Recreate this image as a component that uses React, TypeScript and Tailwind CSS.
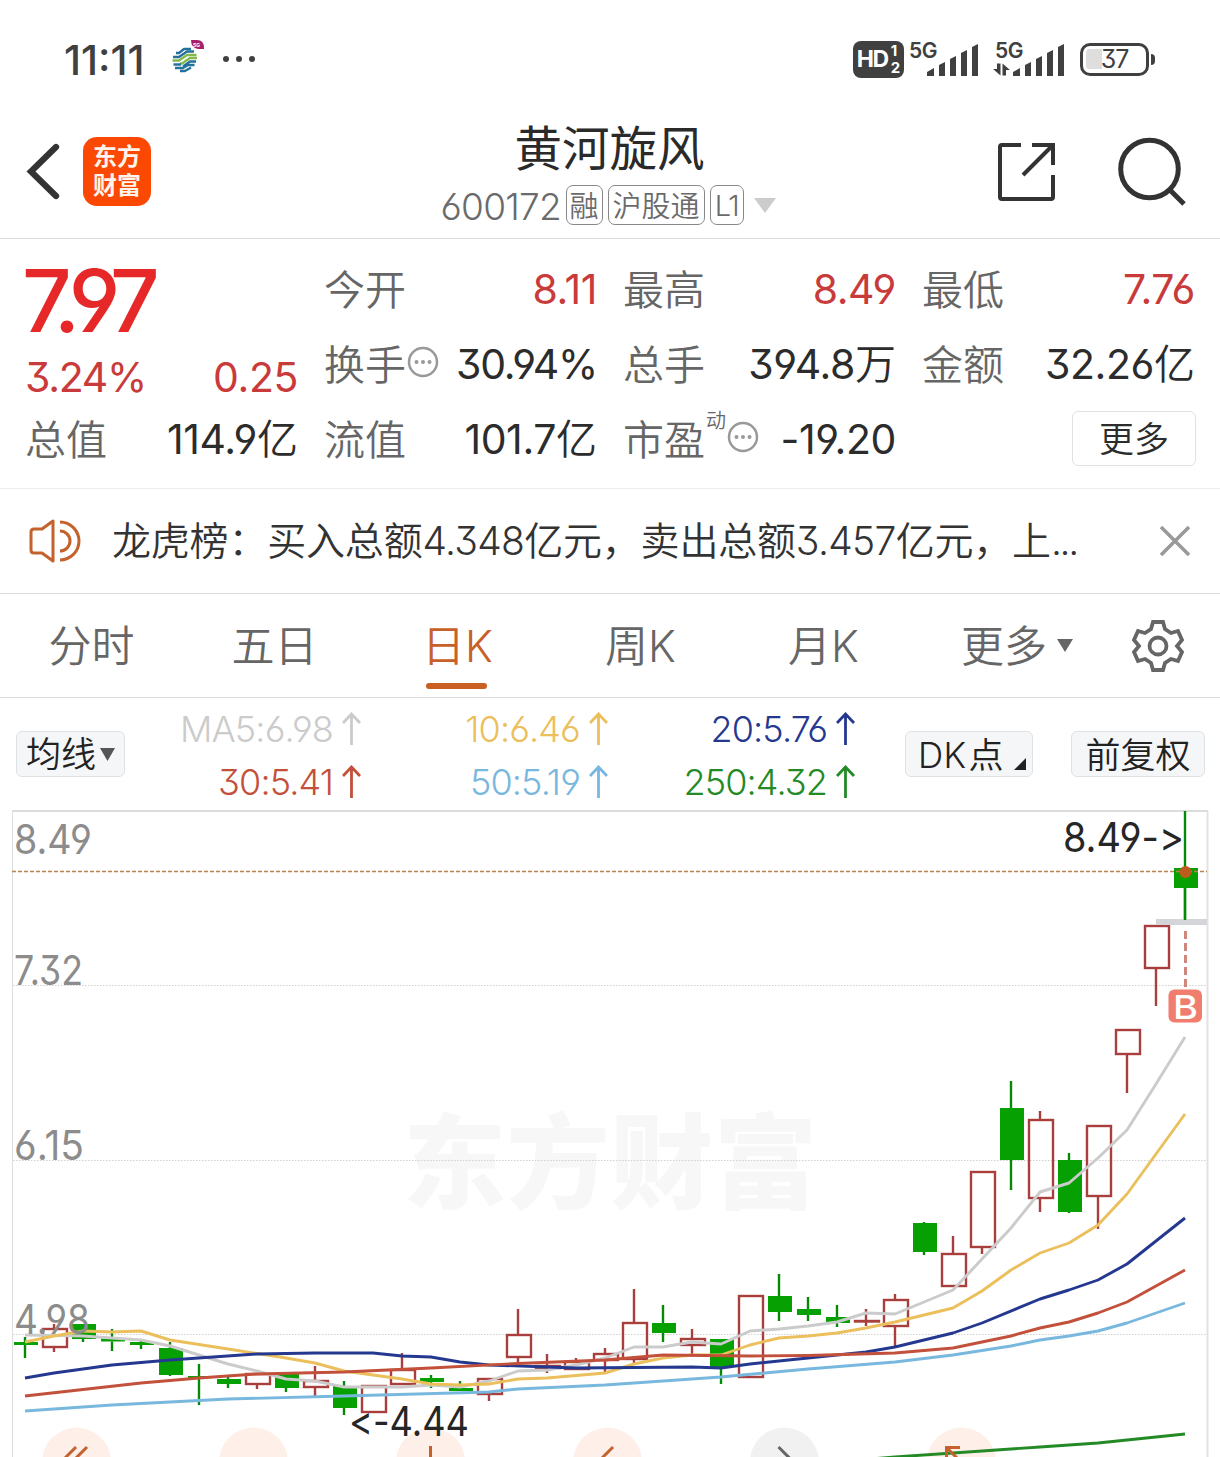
import type { ReactNode } from "react";

type Candle = {
  up: boolean;
  top: number;
  bottom: number;
  high: number;
  low: number;
};

const up = (top: number, bottom: number, high = top, low = bottom): Candle => ({ up: true, top, bottom, high, low });
const down = (top: number, bottom: number, high = top, low = bottom): Candle => ({ up: false, top, bottom, high, low });

const candles: Candle[] = [
  down(1342, 1345, 1337, 1358),
  up(1329, 1347, 1324, 1352),
  down(1324, 1339, 1324, 1342),
  down(1338.5, 1341.5, 1329, 1351),
  down(1342, 1345, 1340, 1349),
  down(1348, 1375, 1342, 1376),
  down(1376, 1378, 1364, 1405),
  down(1379, 1384, 1376, 1388),
  up(1374, 1384, 1373, 1389),
  down(1374, 1388, 1372, 1392),
  up(1381, 1387, 1366, 1398),
  down(1386, 1408, 1381, 1415),
  up(1386, 1412),
  up(1370, 1384, 1353, 1384),
  down(1378, 1382, 1375, 1388),
  down(1388, 1391, 1381, 1391),
  up(1379, 1394, 1379, 1401),
  up(1335, 1357, 1309, 1363),
  up(1366, 1368, 1354, 1373),
  up(1362, 1369, 1358, 1369),
  up(1354, 1360, 1348, 1374),
  up(1323, 1359, 1289, 1364),
  down(1323, 1333, 1305, 1342),
  up(1339, 1345, 1329, 1354),
  down(1339, 1367, 1339, 1384),
  up(1296, 1377),
  down(1296, 1312, 1274, 1321),
  down(1309, 1315, 1297, 1321),
  down(1317, 1323, 1305, 1327),
  up(1321, 1321.5, 1309, 1326),
  up(1300, 1326, 1294, 1346),
  down(1223, 1252, 1222, 1255),
  up(1254, 1286, 1236, 1286),
  up(1172, 1247, 1172, 1254),
  down(1108, 1160, 1081, 1190),
  up(1120, 1198, 1111, 1212),
  down(1160, 1212, 1153, 1213),
  up(1126, 1196, 1126, 1229),
  up(1030, 1054, 1030, 1093),
  up(926, 968, 926, 1006),
  down(868, 888, 811, 920),
];

const maLines = [
  {
    color: "#cbcbcb",
    points:
      "25,1335 83,1336 112,1338 141,1340 170,1346 199,1355 228,1364 257,1371 286,1379 315,1381 344,1387 373,1387 402,1387 431,1385 460,1387 489,1381 518,1371 547,1370 576,1365 605,1358 634,1347 663,1347 692,1342 721,1344 750,1331 779,1329 808,1326 837,1322 866,1313 895,1314 924,1302 953,1290 982,1259 1011,1228 1040,1192 1069,1183 1098,1158 1127,1130 1156,1084 1185,1037",
  },
  {
    color: "#ebc05c",
    points:
      "25,1342 54,1336 83,1331 112,1332 141,1331 170,1340 228,1349 286,1358 315,1363 344,1371 402,1379 431,1384 460,1385 489,1384 518,1379 547,1378 605,1373 634,1364 663,1358 692,1355 721,1355 750,1345 779,1338 808,1336 837,1333 866,1328 895,1322 953,1308 982,1291 1011,1270 1040,1253 1069,1243 1098,1225 1127,1194 1156,1154 1185,1114",
  },
  {
    color: "#25388f",
    points:
      "25,1378 54,1373 112,1365 170,1360 257,1354 315,1353 373,1353 402,1356 431,1357 460,1362 489,1365 547,1367 576,1368 692,1367 721,1368 750,1364 808,1358 866,1352 895,1347 924,1340 953,1333 982,1323 1040,1299 1069,1290 1098,1280 1127,1264 1185,1218",
  },
  {
    color: "#c2503a",
    points:
      "25,1396 141,1383 199,1378 257,1374 344,1372 431,1368 518,1363.5 605,1360 663,1355 750,1356 808,1355.5 895,1353 953,1348 1011,1336 1040,1328 1069,1322 1098,1313 1127,1302 1185,1270",
  },
  {
    color: "#79b8de",
    points:
      "25,1411 112,1405 228,1399 344,1396 489,1392 518,1389 605,1385 721,1377 808,1369 895,1362 953,1355 1011,1346 1040,1340 1069,1336 1098,1331 1127,1323 1185,1303",
  },
  { color: "#248a26", points: "870,1459 895,1457 953,1453 1011,1449 1040,1447 1098,1443 1127,1440 1185,1434" },
];

const axisLabels = [
  { text: "8.49", y: 854, width: 78 },
  { text: "7.32", y: 985, width: 69 },
  { text: "6.15", y: 1160, width: 70 },
  { text: "4.98", y: 1334, width: 76 },
];

const averages = [
  { text: "MA5:6.98", className: "text-[#cbcbcb]" },
  { text: "10:6.46", className: "text-[#ebc05c]" },
  { text: "20:5.76", className: "text-[#25388f]" },
  { text: "30:5.41", className: "text-[#c2503a]" },
  { text: "50:5.19", className: "text-[#79b8de]" },
  { text: "250:4.32", className: "text-[#248a26]" },
];

const tabs = ["分时", "五日", "日K", "周K", "月K"];

function Num({ children, tight }: { children: ReactNode; tight?: boolean }) {
  return <span className={tight ? "font-[380] tracking-[-0.032em]" : "font-[380] tracking-[-0.01em]"}>{children}</span>;
}

function MoreDots() {
  return (
    <svg className="-mt-2 ml-px" width="32" height="32" viewBox="0 0 32 32" fill="none" aria-hidden="true">
      <circle cx="16" cy="16" r="14" stroke="#999" strokeWidth="2.5" />
      <circle cx="9.5" cy="16" r="2" fill="#999" />
      <circle cx="16" cy="16" r="2" fill="#999" />
      <circle cx="22.5" cy="16" r="2" fill="#999" />
    </svg>
  );
}

function Stat({ label, children, red }: { label: ReactNode; children: ReactNode; red?: boolean }) {
  return (
    <div className="flex h-[75px] items-center justify-between">
      <span className="flex items-center pt-0.5 text-[#666]">{label}</span>
      <span className={red ? "text-[#c93a3a]" : "text-[#2c2c2c]"}>{children}</span>
    </div>
  );
}

function Signal({ data }: { data?: boolean }) {
  return (
    <div className="relative h-9 w-[70px]">
      <span className="absolute -top-px -left-px text-[21px] leading-none font-semibold tracking-[-0.02em]">5G</span>
      <svg className="absolute inset-0 overflow-visible" width="70" height="36" viewBox="0 0 70 36" fill="#404040" aria-hidden="true">
        <path d="M17 35V31L24 27V35Z" />
        <path d="M29 35V24L35 21V35Z" />
        <path d="M40 35V18L46 15V35Z" />
        <path d="M51 35V12L57 9V35Z" />
        <path d="M62 35V6L68 3V35Z" />
        {data && (
          <>
            <path d="M1 22.500H4.500V34.500L-3 28H1Z" />
            <path d="M6.500 34.500V22.500L14 29H10V34.500Z" />
          </>
        )}
      </svg>
    </div>
  );
}

function StatusBar() {
  return (
    <div className="flex h-[104px] items-start justify-between pt-[40px] pr-[65px] pl-[64px] text-[#404040]">
      <div className="flex h-[38px] items-center">
        <span className="w-[84px] pt-0.5 text-[41px] leading-none font-medium whitespace-nowrap">11:11</span>
        <svg className="ml-[22px]" width="38" height="38" viewBox="0 0 38 38" fill="none" aria-hidden="true">
          <g strokeLinejoin="round" strokeWidth="2.300">
            <path d="M6 13H9L14 9H21" stroke="#24719b" />
            <path d="M3 17H9L17 11.500H24" stroke="#24719b" />
            <path d="M2.500 20.500H9L17 15H26.500" stroke="#84b84c" />
            <path d="M10 23.500H12L20 18H27" stroke="#84b84c" />
            <path d="M3.500 24.500H11M13 26.500L20 21.500H26" stroke="#24719b" />
            <path d="M5 28H13L18 25H24.500M10 31H15L21 27.500" stroke="#24719b" />
          </g>
          <path d="M21 0H27Q34 0 34 8V9H28Q21 8 21 0Z" fill="#a8206c" />
          <text x="23" y="7" fill="#fff" fontSize="5" fontWeight="700">5G</text>
        </svg>
        <div className="ml-[15px] flex gap-[7px]">
          <i className="size-1.5 rounded-full bg-[#404040]" />
          <i className="size-1.5 rounded-full bg-[#404040]" />
          <i className="size-1.5 rounded-full bg-[#404040]" />
        </div>
      </div>
      <div className="flex h-[38px] items-center">
        <div className="flex h-[37px] w-[51px] items-center justify-center rounded-lg bg-[#404040] text-white">
          <span className="text-[23px] leading-none font-bold tracking-[-0.06em]">HD</span>
          <span className="ml-[3px] flex flex-col text-[15px] leading-[17px] font-bold">
            <span>1</span>
            <span>2</span>
          </span>
        </div>
        <div className="ml-[6px]">
          <Signal />
        </div>
        <div className="ml-[16px]">
          <Signal data />
        </div>
        <div className="relative ml-[14px] flex h-[33px] w-[69px] items-center justify-center rounded-[10px] border-[3.5px] border-[#404040]">
          <i className="absolute top-[3px] left-[3px] h-5 w-4 rounded-l-[4px] bg-[#dedede]" />
          <span className="relative text-[25px] leading-none font-normal tracking-[-0.04em]">37</span>
        </div>
        <i className="ml-0.5 h-[11px] w-1 rounded-r-sm bg-[#404040]" />
      </div>
    </div>
  );
}

function Header() {
  return (
    <header className="flex h-[135px] items-start border-b border-[#d9d9d9]">
      <svg className="mt-[39px] ml-[26px] shrink-0" width="36" height="58" viewBox="0 0 36 58" fill="none" aria-hidden="true">
        <path d="M30 4L5 28.500L30 53" stroke="#333" strokeWidth="6.300" strokeLinecap="round" />
      </svg>
      <div className="mt-[33px] ml-[21px] flex h-[69px] w-[68px] shrink-0 flex-col items-center justify-center rounded-[14px] bg-[#fb4803] pb-[2px] text-[24px] leading-[29px] font-bold text-[#fff5ec]">
        <span>东方</span>
        <span>财富</span>
      </div>
      <div className="ml-[287px] flex w-[343px] shrink-0 flex-col items-center text-[#6b6b6b]">
        <h1 className="mt-[21px] text-[47.500px] leading-[48px] font-normal text-[#2a2a2a]">黄河旋风</h1>
        <div className="mt-[12px] -ml-[3px] flex h-[40px] items-center text-[29px] leading-none">
          <span className="w-[123px] pt-0.5 text-[37px] whitespace-nowrap tracking-[-0.02em]">600172</span>
          <span className="ml-[2px] flex h-10 w-[37px] items-center justify-center rounded-[7px] border border-[#888] pt-0.5">融</span>
          <span className="ml-[5px] flex h-10 w-[97px] items-center justify-center rounded-[7px] border border-[#888] pt-0.5">沪股通</span>
          <span className="ml-[5px] flex h-10 w-[34px] items-center justify-center rounded-[7px] border border-[#888] pt-px tracking-[-0.05em]">L1</span>
          <svg className="ml-[10px]" width="22" height="15" viewBox="0 0 22 15" aria-hidden="true">
            <path d="M0 0H22L11 15Z" fill="#ccc" />
          </svg>
        </div>
      </div>
      <svg className="mt-[37px] ml-[215px] shrink-0" width="62" height="62" viewBox="0 0 62 62" fill="none" stroke="#333" strokeWidth="4" aria-hidden="true">
        <path d="M25 4H6Q4 4 4 6V56Q4 58 6 58H55Q57 58 57 56V34" />
        <path d="M36 4H57V24M56 5L27 34" />
      </svg>
      <svg className="mt-[32px] ml-[59px] shrink-0" width="72" height="72" viewBox="0 0 72 72" fill="none" stroke="#333" strokeWidth="5" aria-hidden="true">
        <circle cx="32.500" cy="33" r="28.800" />
        <path d="M53 54L67 68" />
      </svg>
    </header>
  );
}

function Quote() {
  return (
    <section className="grid h-[250px] grid-cols-4 gap-x-[26px] border-b border-[#ececec] px-[25px] pt-[13px] text-[41px] leading-none whitespace-nowrap">
      <div>
        <div className="-ml-[3px] flex h-[99px] items-center pb-[3px] text-[87px] font-medium tracking-[-0.08em] text-[#e62828]">7.97</div>
        <div className="flex h-[51px] items-center justify-between pt-px text-[#c93a3a]">
          <Num tight>3.24%</Num>
          <Num>0.25</Num>
        </div>
        <Stat label="总值"><Num>114.9</Num>亿</Stat>
      </div>
      <div>
        <Stat label="今开" red><Num>8.11</Num></Stat>
        <Stat label={<>换手<MoreDots /></>}><Num tight>30.94%</Num></Stat>
        <Stat label="流值"><Num>101.7</Num>亿</Stat>
      </div>
      <div>
        <Stat label="最高" red><Num>8.49</Num></Stat>
        <Stat label="总手"><Num>394.8</Num>万</Stat>
        <Stat label={<>市盈<sup className="top-0 -mt-10 ml-px text-[20px]">动</sup><MoreDots /></>}><Num>-19.20</Num></Stat>
      </div>
      <div>
        <Stat label="最低" red><Num>7.76</Num></Stat>
        <Stat label="金额"><Num>32.26</Num>亿</Stat>
        <button className="mt-[9px] -mr-px ml-auto flex h-[55px] w-[124px] items-center justify-center rounded-md border border-[#dfe2e4] pt-0.5 text-[35px] text-[#2c2c2c]">
          更多
        </button>
      </div>
    </section>
  );
}

function Notice() {
  return (
    <section className="flex h-[105px] items-center border-b border-[#d9d9d9] pr-[29px] pl-[28px]">
      <svg width="54" height="46" viewBox="0 0 54 46" fill="none" stroke="#c4622d" strokeWidth="3" strokeLinejoin="round" aria-hidden="true">
        <path d="M25 3V43L14 35H6Q3 35 3 32V14Q3 11 6 11H14Z" />
        <path d="M32 4A19 19 0 0 1 32 42M32 13A10 10 0 0 1 32 33" />
      </svg>
      <p className="ml-[30px] w-[980px] text-[39px] leading-[60px] tracking-[-0.005em] whitespace-nowrap text-[#333]">
        龙虎榜：买入总额<span className="tracking-[-0.018em]">4.348</span>亿元，卖出总额<span className="tracking-[-0.018em]">3.457</span>亿元，上<span className="tracking-[-0.06em]">...</span>
      </p>
      <svg className="ml-auto" width="32" height="32" viewBox="0 0 32 32" stroke="#999" strokeWidth="3.500" aria-hidden="true">
        <path d="M2 2L30 30M30 2L2 30" />
      </svg>
    </section>
  );
}

function PeriodTabs() {
  return (
    <nav className="flex h-[104px] items-center border-b border-[#d9d9d9] text-[43px] leading-none text-[#666]">
      {tabs.map((tab) => (
        <div
          key={tab}
          className={tab === "日K" ? "relative flex h-full w-[183px] items-center justify-center pt-0.5 text-[#c8602a]" : "flex w-[183px] justify-center pt-0.5"}
        >
          {tab}
          {tab === "日K" && <i className="absolute bottom-[8px] left-[60px] h-1.5 w-[61px] rounded-full bg-[#c95f20]" />}
        </div>
      ))}
      <div className="ml-[46px] flex items-center pt-0.5">
        更多
        <svg className="-mt-0.5 ml-[10px]" width="16" height="13" viewBox="0 0 16 13" aria-hidden="true">
          <path d="M0 0H16L8 13Z" fill="#666" />
        </svg>
      </div>
      <svg className="ml-[58px]" width="54" height="54" viewBox="0 0 54 54" fill="none" stroke="#666" strokeWidth="3.800" aria-hidden="true">
        <path d="M22 3H32L34 10L40 14L47 12L51 21L46 27L51 33L47 42L40 40L34 44L32 51H22L20 44L14 40L7 42L3 33L8 27L3 21L7 12L14 14L20 10Z" />
        <circle cx="27" cy="27" r="8.500" />
      </svg>
    </nav>
  );
}

function Averages() {
  return (
    <section className="flex h-[112px] items-start text-[35px] leading-none whitespace-nowrap text-[#222]">
      <button className="mt-[33px] ml-4 flex h-[46px] w-[109px] shrink-0 items-center justify-center rounded-md border border-[#dfe2e4] bg-[#f5f6f8] pt-px">
        均线
        <svg className="ml-1" width="15" height="13" viewBox="0 0 15 13" aria-hidden="true">
          <path d="M0 0H15L7.500 13Z" fill="#555" />
        </svg>
      </button>
      <div className="mt-[4px] -ml-[11px] grid w-[741px] shrink-0 grid-cols-3">
        {averages.map((avg) => (
          <div key={avg.text} className={`flex h-[53px] items-center justify-end text-[36px] ${avg.className}`}>
            <span className="tracking-[-0.024em]">{avg.text}</span>
            <svg className="ml-[9px]" width="19" height="34" viewBox="0 0 19 34" fill="none" stroke="currentColor" strokeWidth="2.800" aria-hidden="true">
              <path d="M9.500 33V2M1 11L9.500 2L18 11" />
            </svg>
          </div>
        ))}
      </div>
      <button className="relative mt-[33px] ml-[50px] flex h-[46px] w-[128px] shrink-0 items-center rounded-md border border-[#dfe2e4] bg-[#f5f6f8] pt-0.5 pl-[12px]">
        <span className="mr-0.5 tracking-[0.01em]">DK</span>点
        <svg className="absolute right-1.5 bottom-1.5" width="12" height="12" viewBox="0 0 12 12" aria-hidden="true">
          <path d="M12 0V12H0Z" fill="#222" />
        </svg>
      </button>
      <button className="mt-[33px] ml-[38px] flex h-[46px] w-[134px] shrink-0 items-center justify-center rounded-md border border-[#dfe2e4] bg-[#f5f6f8] pt-0.5">
        前复权
      </button>
    </section>
  );
}

function Chart() {
  return (
    <svg className="block" width="1220" height="647" viewBox="0 810 1220 647" fill="none" aria-label="日K">
      <text x="403" y="1201" fontSize="103" fontWeight="900" fill="#f7f7f7" textLength="414">东方财富</text>
      <path d="M12.500 1457V811" stroke="#dedede" />
      <path d="M12 811H1208" stroke="#dcdcdc" strokeWidth="2" />
      <path d="M1207.500 811V1457" stroke="#e2e2e2" strokeWidth="2" />
      <path d="M13 985.500H1207M13 1160.500H1207M13 1334.500H1207" stroke="#d0d0d0" strokeDasharray="1.500 1.500" />
      {[76.500, 253.500, 430.500, 607.500, 784.500, 961.500].map((cx) => (
        <circle key={cx} cx={cx} cy="1462" r="34.500" fill={cx === 784.500 ? "#f1f1f1" : "#fef0e9"} />
      ))}
      {candles.map((c, i) => {
        const x = 25 + i * 29;
        const color = c.up ? "#a83f3d" : "#048a06";
        return (
          <g key={x} stroke={color} strokeWidth="2.400">
            {c.high < c.top && <path d={`M${x} ${c.high}V${c.top}`} />}
            {c.low > c.bottom && <path d={`M${x} ${c.bottom}V${c.low}`} />}
            {c.up ? (
              <rect x={x - 11} y={c.top} width="24" height={c.bottom - c.top} />
            ) : (
              <rect x={x - 11} y={c.top} width="24" height={c.bottom - c.top} fill="#06a003" stroke="none" />
            )}
          </g>
        );
      })}
      {maLines.map((line) => (
        <polyline key={line.color} points={line.points} stroke={line.color} strokeWidth="2.900" strokeLinejoin="round" />
      ))}
      <path d="M12 871.500H1207" stroke="#b98450" strokeWidth="1.500" strokeDasharray="4 2" />
      <circle cx="1185.500" cy="872" r="6" fill="#bd5d1d" />
      <path d="M1156 922H1207" stroke="#d4d5d9" strokeWidth="6" />
      <path d="M1185 888V920" stroke="#048a06" strokeWidth="2.400" />
      <path d="M1185.500 931V988" stroke="#cf877d" strokeWidth="3" strokeDasharray="8 4" />
      <rect x="1168.500" y="989.500" width="33.500" height="33" rx="6" fill="#f07d6d" />
      <text x="1173" y="1018.500" fontSize="33" fontWeight="500" fill="#fff" textLength="25" lengthAdjust="spacingAndGlyphs">B</text>
      <g fontSize="41" fontWeight="380" fill="#8c8c8c">
        {axisLabels.map((label) => (
          <text key={label.text} x="14" y={label.y} textLength={label.width} lengthAdjust="spacingAndGlyphs">
            {label.text}
          </text>
        ))}
      </g>
      <g fontSize="41" fontWeight="380" fill="#262626" className="[font-feature-settings:'calt'_0,'cv03','cv04','cv09']">
        <text x="1063" y="852" textLength="121" lengthAdjust="spacingAndGlyphs">8.49-&gt;</text>
        <text x="349" y="1436" textLength="120" lengthAdjust="spacingAndGlyphs">&lt;-4.44</text>
      </g>
      <g stroke="#c4622d" strokeWidth="3">
        <path d="M65 1458L76 1447M76 1458L87 1447" />
        <path d="M430.500 1446V1458" />
        <path d="M602 1458L613 1447" />
        <path d="M946.500 1458V1447.500H960M947 1448L957 1458" />
        <path d="M778.500 1447L789.500 1458" stroke="#666" />
      </g>
    </svg>
  );
}

export default function App() {
  return (
    <main className="h-[1457px] w-[1220px] overflow-hidden bg-white font-['Inter','Noto_Sans_CJK_SC',sans-serif] font-[350] [font-feature-settings:'cv03','cv04','cv09']">
      <StatusBar />
      <Header />
      <Quote />
      <Notice />
      <PeriodTabs />
      <Averages />
      <Chart />
    </main>
  );
}
